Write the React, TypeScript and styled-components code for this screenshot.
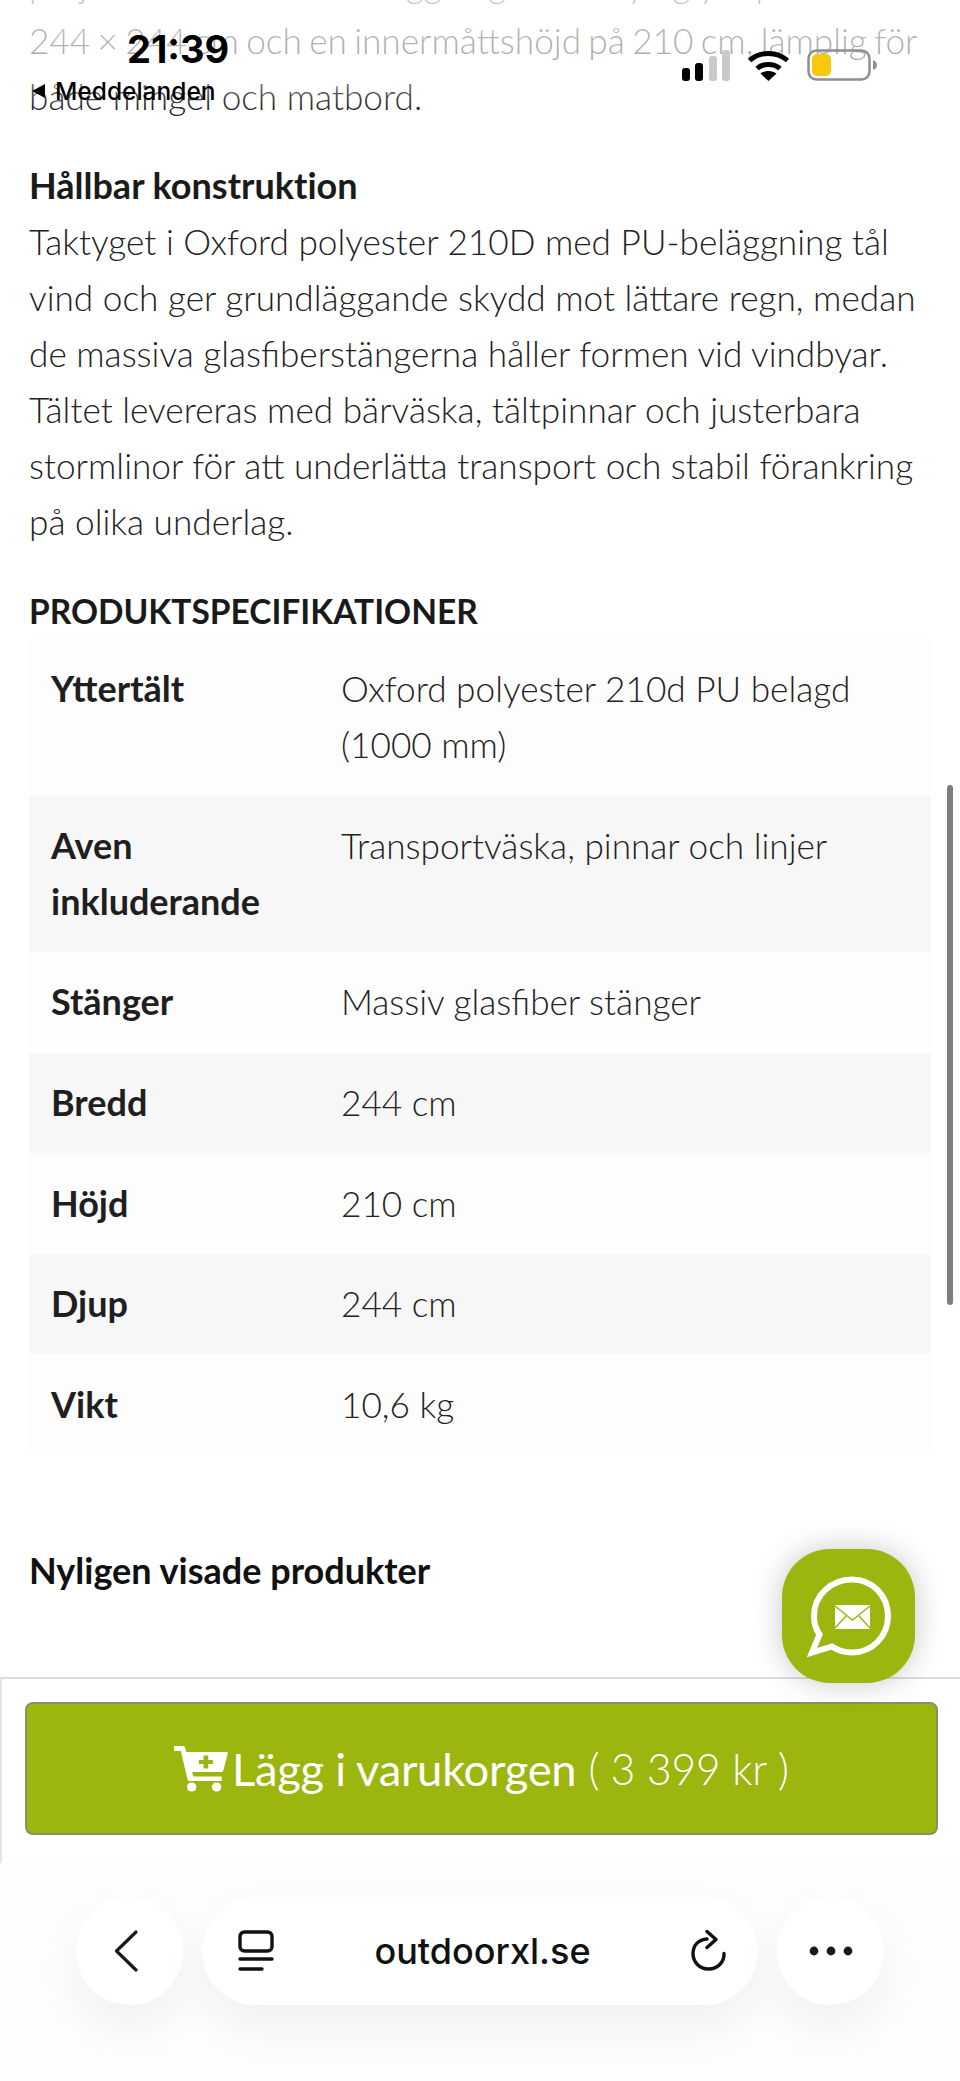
import React from 'react';
import styled, { createGlobalStyle } from 'styled-components';

const GlobalStyle = createGlobalStyle`
  html, body {
    margin: 0;
    padding: 0;
    background: #ffffff;
  }
`;

const Page = styled.div`
  position: relative;
  width: 960px;
  height: 2081px;
  overflow: hidden;
  display: flex;
  flex-direction: column;
  background: #ffffff;
  font-family: Lato, "Open Sans", sans-serif;
  color: #1a1a1a;
`;

const Content = styled.main`
  height: 1721px;
  margin-top: -44px;
  padding: 0 29px;
  box-sizing: border-box;
  flex: none;
`;

const Paragraph = styled.p`
  margin: 0;
  font-size: 35.2px;
  font-weight: 300;
  line-height: 56px;
  color: #222;
`;

const ClippedLine = styled.div`
  font-size: 35.2px;
  font-weight: 300;
  line-height: 56px;
  white-space: nowrap;
`;

const TightLine = styled.span`
  display: block;
  white-space: nowrap;
  word-spacing: -2.2px;
`;

const TopFade = styled.div`
  position: absolute;
  top: 0;
  left: 0;
  right: 0;
  height: 110px;
  background: linear-gradient(to bottom, rgba(255, 255, 255, 0.75), rgba(255, 255, 255, 0.6) 60%, rgba(255, 255, 255, 0));
`;

const SubHeading = styled.h3`
  margin: 34px 0 0;
  font-size: 36px;
  font-weight: 700;
  font-variant-ligatures: none;
  line-height: 55px;
  color: #1a1a1a;
`;

const SpecHeading = styled.h2`
  margin: 34px 0 0;
  font-size: 33.5px;
  font-weight: 700;
  line-height: 56px;
  color: #1a1a1a;
`;

const RecentHeading = styled.h2`
  margin: 87px 0 0;
  font-size: 36px;
  font-weight: 700;
  line-height: 56px;
  color: #111;
`;

const SpecTable = styled.table`
  width: 902px;
  table-layout: fixed;
  border-collapse: collapse;
`;

const SpecRow = styled.tr`
  background: #fdfdfd;

  &:nth-child(even) {
    background: #f7f7f7;
  }
`;

const SpecName = styled.th`
  width: 312px;
  box-sizing: border-box;
  padding: 21.2px 60px 23.4px 22px;
  text-align: left;
  vertical-align: top;
  font-size: 36px;
  font-weight: 700;
  line-height: 56px;
  color: #1f1f1f;
`;

const SpecValue = styled.td`
  padding: 21.2px 22px 23.4px 0;
  vertical-align: top;
  font-size: 35.2px;
  font-weight: 300;
  line-height: 56px;
  color: #222;
`;

const ScrollThumb = styled.div`
  position: absolute;
  top: 785px;
  left: 947px;
  width: 6px;
  height: 520px;
  border-radius: 3px;
  background: #7d7d7d;
`;

const StatusBar = styled.header`
  position: absolute;
  top: 26px;
  left: 29px;
  right: 83px;
  display: flex;
  justify-content: space-between;
  align-items: flex-start;
`;

const StatusLeft = styled.div`
  display: flex;
  flex-direction: column;
  font-family: Inter, "Liberation Sans", sans-serif;
  color: #000;
`;

const Clock = styled.div`
  margin-left: 98px;
  font-size: 38px;
  font-weight: 700;
  line-height: 46px;
`;

const BackToApp = styled.div`
  display: flex;
  align-items: center;
  gap: 10px;
  margin: 4px 0 0 3px;
  font-size: 24.5px;
  font-weight: 500;
  line-height: 30px;
`;

const StatusIcons = styled.div`
  display: flex;
  align-items: center;
  gap: 17px;
  margin-top: 23px;
`;

const CartBar = styled.section`
  height: 186px;
  flex: none;
  box-sizing: border-box;
  padding: 23px 23px 0 23px;
  border-top: 2px solid #dddddd;
  border-left: 2px solid #e4e4e4;
  background: #ffffff;
`;

const CartButton = styled.button`
  display: flex;
  align-items: center;
  justify-content: center;
  width: 913px;
  height: 133px;
  padding: 0;
  box-sizing: border-box;
  border: 2px solid #8a8f6a;
  border-radius: 8px;
  background: #9cb50f;
  color: #ffffff;
  font-family: Lato, sans-serif;
  font-size: 45.4px;
  font-weight: 400;
`;

const CartLabel = styled.span`
  margin-left: 4px;
  letter-spacing: -0.3px;
`;

const CartPrice = styled.span`
  margin-left: 12px;
  font-weight: 300;
  font-size: 42.4px;
`;

const ChatBubble = styled.button`
  position: absolute;
  top: 1549px;
  left: 782px;
  width: 133px;
  height: 134px;
  display: flex;
  align-items: center;
  justify-content: center;
  padding: 0;
  border: none;
  border-radius: 48px;
  background: #9cb50f;
  box-shadow: 0 0 30px rgba(0, 0, 0, 0.22);
`;

const BrowserDock = styled.nav`
  flex: 1;
  box-sizing: border-box;
  display: flex;
  align-items: flex-start;
  gap: 19px;
  padding: 34px 76px 0 76px;
  background: #fdfdfd;
`;

const RoundButton = styled.div<{ $nudge?: number }>`
  width: 107px;
  height: 108px;
  flex: none;
  box-sizing: border-box;
  padding-right: ${(p) => p.$nudge ?? 0}px;
  display: flex;
  align-items: center;
  justify-content: center;
  border-radius: 50%;
  background: #ffffff;
  box-shadow: 0 22px 50px rgba(0, 0, 0, 0.05);
`;

const AddressPill = styled.div`
  flex: 1;
  height: 108px;
  display: grid;
  grid-template-columns: 1fr auto 1fr;
  align-items: center;
  padding: 0 31px 0 36px;
  border-radius: 54px;
  background: #ffffff;
  box-shadow: 0 22px 50px rgba(0, 0, 0, 0.05);

  > svg:last-child {
    justify-self: end;
  }
`;

const AddressText = styled.span`
  font-family: Inter, "Liberation Sans", sans-serif;
  font-size: 36px;
  font-weight: 500;
  color: #111;
`;

const specs: { name: string; value: string }[] = [
  { name: 'Yttertält', value: 'Oxford polyester 210d PU belagd (1000 mm)' },
  { name: 'Aven inkluderande', value: 'Transportväska, pinnar och linjer' },
  { name: 'Stänger', value: 'Massiv glasfiber stänger' },
  { name: 'Bredd', value: '244 cm' },
  { name: 'Höjd', value: '210 cm' },
  { name: 'Djup', value: '244 cm' },
  { name: 'Vikt', value: '10,6 kg' },
];

const SignalIcon = () => (
  <svg width="48" height="31" viewBox="0 0 48 31">
    <rect x="0" y="18" width="8" height="13" rx="3" fill="#000" />
    <rect x="13" y="13" width="8" height="18" rx="3" fill="#000" />
    <rect x="27" y="6" width="8" height="25" rx="3" fill="#c9c9c9" />
    <rect x="40" y="0" width="8" height="31" rx="3" fill="#c9c9c9" />
  </svg>
);

const WifiIcon = () => (
  <svg width="43" height="31" viewBox="0 0 43 31">
    <path d="M2.5 10.5C13 1 30 1 40.5 10.5" fill="none" stroke="#000" strokeWidth="5" />
    <path d="M10 18.5C16 13 27 13 33 18.5" fill="none" stroke="#000" strokeWidth="5" />
    <path d="M21.5 31L13.5 23.5C18 20 25 20 29.5 23.5Z" fill="#000" />
  </svg>
);

const BatteryIcon = () => (
  <svg width="70" height="32" viewBox="0 0 70 32">
    <rect x="1.5" y="1.5" width="61" height="29" rx="8" fill="none" stroke="#8f8f8f" strokeWidth="2.5" />
    <rect x="5" y="5" width="19" height="22" rx="5" fill="#f9c80e" />
    <path d="M66 11C69 12 70 14 70 16C70 18 69 20 66 21Z" fill="#8f8f8f" />
  </svg>
);

const BackTriangle = () => (
  <svg width="13" height="14" viewBox="0 0 13 14">
    <path d="M13 0V14L0 7Z" fill="#000" />
  </svg>
);

const CartPlusIcon = () => (
  <svg width="54" height="46" viewBox="0 0 52 46" preserveAspectRatio="none">
    <path
      d="M0 0H8.5C9.5 0 10.3 .6 10.6 1.6L12 6H51C51.8 6 52 6.6 51.8 7.4L47.5 24.5C47.2 25.5 46.4 26 45.5 26H17.5L18.5 30.5H46V35H15C14 35 13.2 34.4 13 33.4L6.6 5H0Z"
      fill="#fff"
    />
    <circle cx="17" cy="41" r="4.6" fill="#fff" />
    <circle cx="41" cy="41" r="4.6" fill="#fff" />
    <path d="M28.5 9.5H33V14H37.5V18H33V22.5H28.5V18H24V14H28.5Z" fill="#9cb50f" />
  </svg>
);

const ChatIcon = () => (
  <svg width="84" height="84" viewBox="0 0 84 84">
    <path
      d="M45 5.5C24.5 5.5 7 21 7 42C7 49.5 9 55.5 12.5 60.5L5 78.5L25 72.5C31 76.5 38 78.5 45 78.5C65.5 78.5 81 62 81 42C81 21.5 65.5 5.5 45 5.5Z"
      fill="none"
      stroke="#fff"
      strokeWidth="6"
    />
    <rect x="28" y="31" width="35" height="24" fill="#fff" />
    <path d="M28 32L45.5 46L63 32M28 54L39.5 41.5M63 54L51.5 41.5" fill="none" stroke="#9cb50f" strokeWidth="1.5" />
  </svg>
);

const ChevronIcon = () => (
  <svg width="24" height="42" viewBox="0 0 24 42">
    <path d="M22 2L2.5 21L22 40" fill="none" stroke="#1a1a1a" strokeWidth="3.2" strokeLinecap="round" strokeLinejoin="round" />
  </svg>
);

const TabsIcon = () => (
  <svg width="36" height="42" viewBox="0 0 36 42">
    <rect x="2" y="2" width="32" height="19" rx="4.5" fill="none" stroke="#111" strokeWidth="3.4" />
    <path d="M2 29H34M2 39H24" stroke="#111" strokeWidth="3.4" strokeLinecap="round" />
  </svg>
);

const ReloadIcon = () => (
  <svg width="36" height="42" viewBox="0 0 36 42">
    <path d="M16 9C7.5 9.5 2 15.5 2 23.5C2 32 8.5 39 17.5 39C26.5 39 33.5 32 33 23.5" fill="none" stroke="#111" strokeWidth="3.4" strokeLinecap="round" />
    <path d="M16 1.5L25 9.5L16 17.5" fill="none" stroke="#111" strokeWidth="3.4" strokeLinecap="round" strokeLinejoin="round" />
  </svg>
);

const DotsIcon = () => (
  <svg width="44" height="10" viewBox="0 0 44 10">
    <circle cx="5" cy="5" r="4.4" fill="#1a1a1a" />
    <circle cx="22" cy="5" r="4.4" fill="#1a1a1a" />
    <circle cx="39" cy="5" r="4.4" fill="#1a1a1a" />
  </svg>
);

const App: React.FC = () => {
  return (
    <Page>
      <GlobalStyle />
      <Content>
        <ClippedLine>projekt med tält och beläggning och en ytlig yta på</ClippedLine>
        <Paragraph>
          <TightLine>244 × 244 cm och en innermåttshöjd på 210 cm, lämplig för</TightLine>
          både mingel och matbord.
        </Paragraph>
        <SubHeading>Hållbar konstruktion</SubHeading>
        <Paragraph>
          Taktyget i Oxford polyester 210D med PU-beläggning tål vind och ger grundläggande skydd mot lättare regn,
          medan de massiva glasfiberstängerna håller formen vid vindbyar. Tältet levereras med bärväska, tältpinnar och
          justerbara stormlinor för att underlätta transport och stabil förankring på olika underlag.
        </Paragraph>
        <SpecHeading>PRODUKTSPECIFIKATIONER</SpecHeading>
        <SpecTable>
          <tbody>
            {specs.map((spec) => (
              <SpecRow key={spec.name}>
                <SpecName>{spec.name}</SpecName>
                <SpecValue>{spec.value}</SpecValue>
              </SpecRow>
            ))}
          </tbody>
        </SpecTable>
        <RecentHeading>Nyligen visade produkter</RecentHeading>
      </Content>

      <CartBar>
        <CartButton>
          <CartPlusIcon />
          <CartLabel>Lägg i varukorgen</CartLabel>
          <CartPrice>( 3 399 kr )</CartPrice>
        </CartButton>
      </CartBar>

      <BrowserDock>
        <RoundButton $nudge={8}>
          <ChevronIcon />
        </RoundButton>
        <AddressPill>
          <TabsIcon />
          <AddressText>outdoorxl.se</AddressText>
          <ReloadIcon />
        </AddressPill>
        <RoundButton>
          <DotsIcon />
        </RoundButton>
      </BrowserDock>

      <TopFade />
      <ScrollThumb />
      <ChatBubble>
        <ChatIcon />
      </ChatBubble>
      <StatusBar>
        <StatusLeft>
          <Clock>21:39</Clock>
          <BackToApp>
            <BackTriangle />
            Meddelanden
          </BackToApp>
        </StatusLeft>
        <StatusIcons>
          <SignalIcon />
          <WifiIcon />
          <BatteryIcon />
        </StatusIcons>
      </StatusBar>
    </Page>
  );
};

export default App;
